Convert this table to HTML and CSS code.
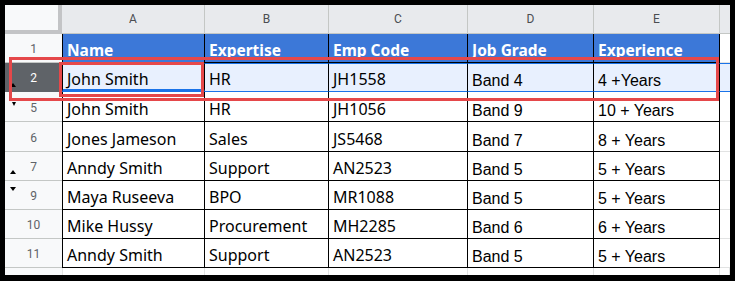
FILE: index.html
```html
<!DOCTYPE html>
<html>
<head>
<meta charset="utf-8">
<link rel="stylesheet" href="styles.css">
</head>
<body>
<div class="sheet">
  <div class="corner"></div>
  <div class="ch">A</div>
  <div class="ch">B</div>
  <div class="ch">C</div>
  <div class="ch">D</div>
  <div class="ch">E</div>
  <div class="ch ch-f"></div>

  <div class="rh">1</div>
  <div class="c hd first">Name</div>
  <div class="c hd">Expertise</div>
  <div class="c hd">Emp Code</div>
  <div class="c hd">Job Grade</div>
  <div class="c hd">Experience</div>
  <div class="f"></div>

  <div class="rh rh-sel">2<span class="tri up tri-sel"></span></div>
  <div class="c sel first active">John Smith</div>
  <div class="c sel">HR</div>
  <div class="c sel">JH1558</div>
  <div class="c sel num">Band 4</div>
  <div class="c sel num">4 +Years</div>
  <div class="f f-sel"></div>

  <div class="rh">5<span class="tri down tri-top"></span></div>
  <div class="c first">John Smith</div>
  <div class="c">HR</div>
  <div class="c">JH1056</div>
  <div class="c num">Band 9</div>
  <div class="c num">10 + Years</div>
  <div class="f"></div>

  <div class="rh">6</div>
  <div class="c first">Jones Jameson</div>
  <div class="c">Sales</div>
  <div class="c">JS5468</div>
  <div class="c num">Band 7</div>
  <div class="c num">8 + Years</div>
  <div class="f"></div>

  <div class="rh">7<span class="tri up tri-bottom"></span></div>
  <div class="c first">Anndy Smith</div>
  <div class="c">Support</div>
  <div class="c">AN2523</div>
  <div class="c num">Band 5</div>
  <div class="c num">5 + Years</div>
  <div class="f"></div>

  <div class="rh">9<span class="tri down tri-top9"></span></div>
  <div class="c first">Maya Ruseeva</div>
  <div class="c">BPO</div>
  <div class="c">MR1088</div>
  <div class="c num">Band 5</div>
  <div class="c num">5 + Years</div>
  <div class="f"></div>

  <div class="rh">10</div>
  <div class="c first">Mike Hussy</div>
  <div class="c">Procurement</div>
  <div class="c">MH2285</div>
  <div class="c num">Band 6</div>
  <div class="c num">6 + Years</div>
  <div class="f"></div>

  <div class="rh">11</div>
  <div class="c first">Anndy Smith</div>
  <div class="c">Support</div>
  <div class="c">AN2523</div>
  <div class="c num">Band 5</div>
  <div class="c num">5 + Years</div>
  <div class="f"></div>

  <div class="rh rh-last"></div>
  <div class="e"></div>
  <div class="e"></div>
  <div class="e"></div>
  <div class="e"></div>
  <div class="e"></div>
  <div class="e"></div>
</div>
<div class="mark mark-outer"></div>
<div class="mark mark-inner"></div>
</body>
</html>
```

FILE: styles.css
```css
html, body {
  margin: 0;
  padding: 0;
  width: 735px;
  height: 281px;
  background: #000;
  overflow: hidden;
}
body {
  position: relative;
}
.sheet {
  margin: 5px 0 0 5px;
  width: 725px;
  height: 270px;
  background: #fff;
  overflow: hidden;
  display: grid;
  grid-template-columns: 57px 143px 124px 139px 126px 126px 10px;
  grid-template-rows: 29px 29px 29px 30px 30px 29px 29px 29px 29px 7px;
}
.sheet > div {
  box-sizing: border-box;
}
.corner {
  background: #f8f9fa;
  border-right: 4px solid #c3c4c6;
  border-bottom: 4px solid #c3c4c6;
}
.ch {
  background: #e8eaed;
  border-right: 1px solid #c4c7c5;
  border-bottom: 1px solid #c4c7c5;
  display: flex;
  align-items: center;
  justify-content: center;
  font-family: Roboto, "Liberation Sans", sans-serif;
  font-size: 12px;
  color: #4a4d51;
  padding-bottom: 1px;
}
.ch-f {
  border-right: none;
}
.rh {
  position: relative;
  background: #f8f9fa;
  border-bottom: 1px solid #c4c7c5;
  display: flex;
  align-items: center;
  justify-content: center;
  font-family: Roboto, "Liberation Sans", sans-serif;
  font-size: 12px;
  color: #5f6368;
  padding-top: 2px;
}
.rh-sel {
  background: #5f6368;
  color: #fff;
  border-bottom-color: #5f6368;
}
.rh-last {
  border-bottom: none;
}
.tri {
  position: absolute;
  width: 0;
  height: 0;
  border-left: 3.5px solid transparent;
  border-right: 3.5px solid transparent;
  left: 5px;
}
.tri.up {
  border-bottom: 4px solid #000;
}
.tri.down {
  border-top: 4px solid #000;
}
.tri-sel {
  top: 20px;
}
.tri-top {
  top: 10px;
  border-left-width: 2px;
  border-right-width: 2px;
  border-top-width: 3px;
  left: 7px;
}
.tri-bottom {
  top: 18px;
}
.tri-top9 {
  top: 6px;
}
.c {
  border-right: 1px solid #000;
  border-bottom: 1px solid #000;
  display: flex;
  align-items: flex-end;
  padding: 0 3px 2px 4px;
  font-family: "Noto Sans", "Open Sans", sans-serif;
  font-size: 16px;
  line-height: 20px;
  color: #000;
  white-space: nowrap;
  overflow: hidden;
}
.first {
  border-left: 1px solid #000;
}
.num {
  font-family: "Liberation Sans", Arial, sans-serif;
  font-size: 16px;
  line-height: 19px;
  padding-bottom: 1px;
}
.hd {
  background: #3c78d8;
  color: #fff;
  font-weight: bold;
  font-size: 15.5px;
  padding-bottom: 2px;
}
.sel {
  background: #e8f0fe;
  border-top: 1px solid #1a73e8;
  border-bottom: 1px solid #1a73e8;
}
.active {
  border-bottom: 3px solid #1a73e8;
  padding-bottom: 0;
}
.f {
  background: #fff;
  border-bottom: 1px solid #e2e3e3;
}
.f-sel {
  background: #e8f0fe;
  border-top: 1px solid #1a73e8;
  border-bottom: 1px solid #1a73e8;
}
.e {
  border-right: 1px solid #e2e3e3;
}
.rh-last + .e {
  border-left: 1px solid #e2e3e3;
}
.mark {
  position: absolute;
  box-sizing: border-box;
  border: 3px solid #e5484a;
}
.mark-outer {
  left: 9px;
  top: 57px;
  width: 710px;
  height: 44px;
}
.mark-inner {
  left: 59px;
  top: 62px;
  width: 145px;
  height: 35px;
}
```
